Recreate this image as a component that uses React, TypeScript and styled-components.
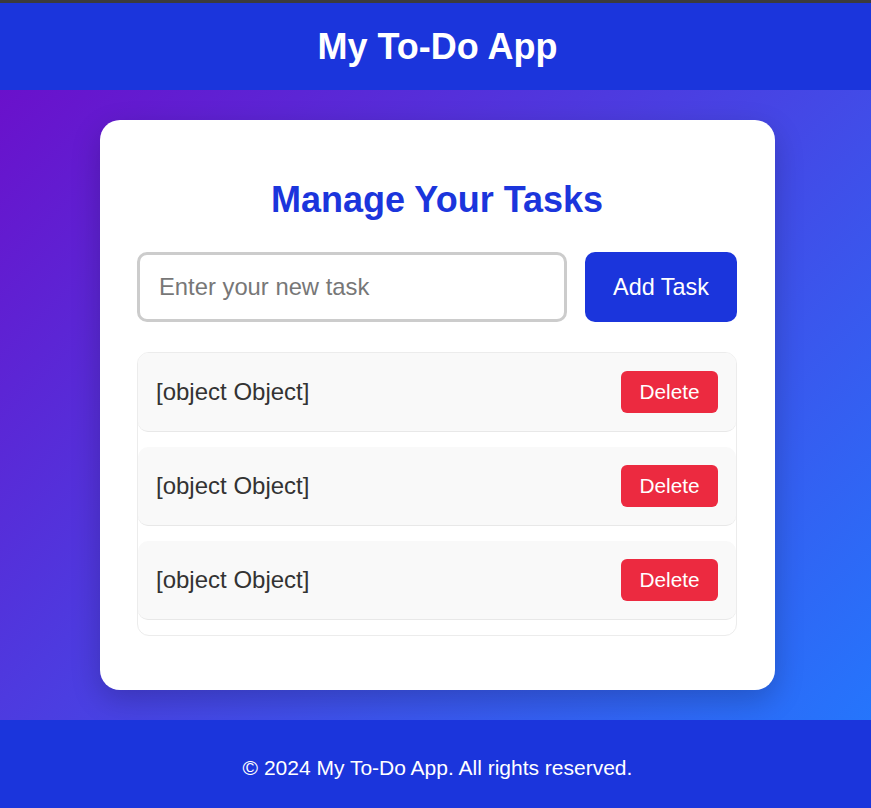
import React, { useState } from "react";
import styled, { createGlobalStyle } from "styled-components";

const GlobalStyle = createGlobalStyle`
  html, body {
    margin: 0;
    padding: 0;
  }
  body {
    font-family: "Liberation Sans", Arial, sans-serif;
    background: #fff;
  }
  * {
    box-sizing: border-box;
  }
`;

const Page = styled.div`
  display: flex;
  flex-direction: column;
  min-height: 808px;
  border-top: 3px solid #3b3b3d;
`;

const Header = styled.header`
  height: 87px;
  background: #1b35dc;
  display: flex;
  align-items: center;
  justify-content: center;
  padding-left: 4px;
`;

const HeaderTitle = styled.h1`
  margin: 0;
  color: #fff;
  font-size: 36px;
  font-weight: 700;
`;

const Main = styled.main`
  height: 630px;
  background: linear-gradient(135deg, #6a11cb 0%, #2575fc 100%);
  display: flex;
  justify-content: center;
  padding: 30px 0 0 4px;
`;

const Card = styled.section`
  width: 675px;
  height: 570px;
  background: #fff;
  border-radius: 20px;
  box-shadow: 0 10px 30px rgba(0, 0, 0, 0.2);
  padding: 59px 38px 0 37px;
`;

const Title = styled.h2`
  margin: 0 0 31px;
  text-align: center;
  color: #1b35dc;
  font-size: 36px;
  font-weight: 700;
  line-height: 42px;
`;

const Form = styled.form`
  display: flex;
  gap: 18px;
  margin-bottom: 30px;
`;

const Input = styled.input`
  flex: 1;
  height: 70px;
  border: 3px solid #cccccc;
  border-radius: 10px;
  padding: 0 19px;
  font-family: inherit;
  font-size: 23.8px;
  color: #333;
  outline: none;

  &::placeholder {
    color: #777;
  }
`;

const AddButton = styled.button`
  width: 152px;
  height: 70px;
  border: none;
  border-radius: 10px;
  background: #1b35dc;
  color: #fff;
  font-family: inherit;
  font-size: 23.4px;
  cursor: pointer;
`;

const List = styled.ul`
  list-style: none;
  margin: 0;
  padding: 0 0 15px;
  border: 1px solid #ececec;
  border-radius: 12px;
  display: flex;
  flex-direction: column;
  gap: 15px;
`;

const Item = styled.li`
  height: 79px;
  background: #f9f9f9;
  border-bottom: 1px solid #e8e8e8;
  border-radius: 10px;
  display: flex;
  align-items: center;
  justify-content: space-between;
  padding: 0 18px;
`;

const ItemText = styled.span`
  font-size: 24px;
  color: #333;
`;

const DeleteButton = styled.button`
  width: 97px;
  height: 42px;
  border: none;
  border-radius: 6px;
  background: #ec2a40;
  color: #fff;
  font-family: inherit;
  font-size: 20.8px;
  cursor: pointer;
`;

const Footer = styled.footer`
  flex: 1;
  background: #1b35dc;
  display: flex;
  align-items: center;
  justify-content: center;
  padding: 8px 0 0 4px;
  color: #fff;
  font-size: 21px;
`;

export default function App() {
  const [tasks, setTasks] = useState<object[]>([{ id: 1 }, { id: 2 }, { id: 3 }]);

  return (
    <>
      <GlobalStyle />
      <Page>
        <Header>
          <HeaderTitle>My To-Do App</HeaderTitle>
        </Header>
        <Main>
          <Card>
            <Title>Manage Your Tasks</Title>
            <Form onSubmit={(e) => e.preventDefault()}>
              <Input placeholder="Enter your new task" />
              <AddButton type="submit">Add Task</AddButton>
            </Form>
            <List>
              {tasks.map((task, i) => (
                <Item key={i}>
                  <ItemText>{String(task)}</ItemText>
                  <DeleteButton onClick={() => setTasks(tasks.filter((_, j) => j !== i))}>
                    Delete
                  </DeleteButton>
                </Item>
              ))}
            </List>
          </Card>
        </Main>
        <Footer>© 2024 My To-Do App. All rights reserved.</Footer>
      </Page>
    </>
  );
}
